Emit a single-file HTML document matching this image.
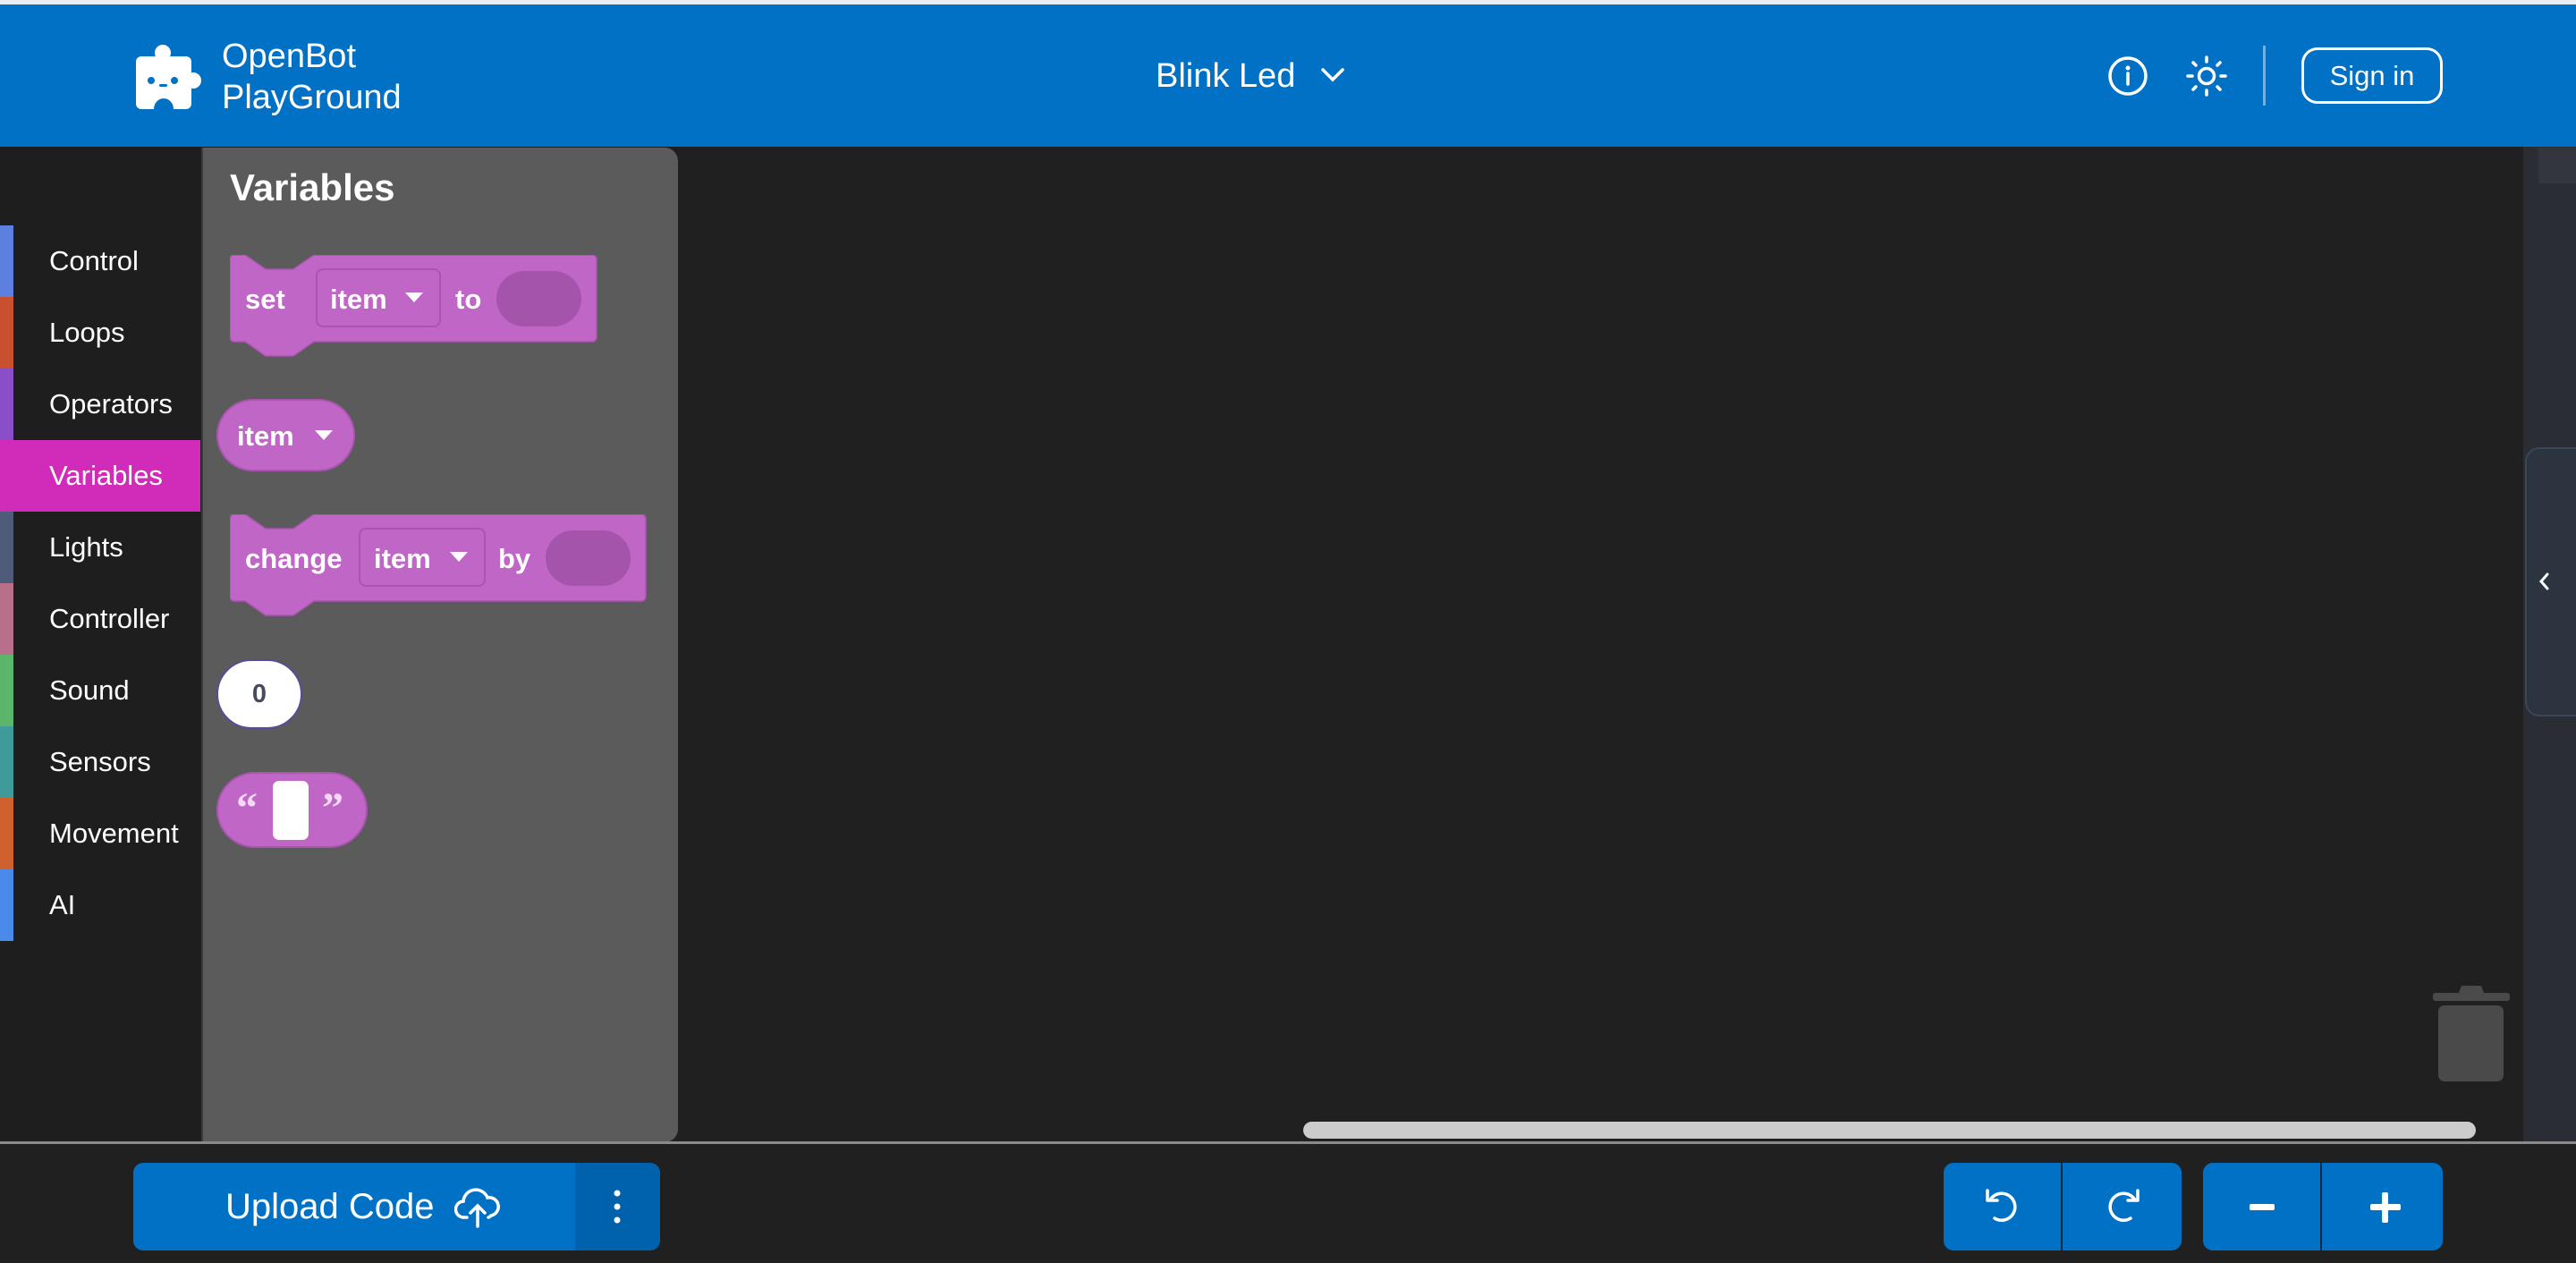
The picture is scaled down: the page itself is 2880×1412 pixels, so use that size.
<!DOCTYPE html>
<html><head><meta charset="utf-8"><style>
*{margin:0;padding:0;box-sizing:border-box}
body{width:2880px;height:1412px;overflow:hidden;background:#202020;font-family:"Liberation Sans",sans-serif;position:relative}
.a{position:absolute}
.hdr{left:0;top:5px;width:2880px;height:159px;background:#0071C5}
.cat{left:0;width:224px;height:80px;color:#fff;font-size:31px;line-height:80px;padding-left:55px}
.bar{left:0;width:15px;height:80px}
.bt{color:#fff;font-weight:bold;font-size:31px;line-height:1}
.btn{background:#0071C5;top:1300px;height:98px}
</style></head><body>
<div class="a" style="left:0;top:0;width:2880px;height:5px;background:#e8eef4"></div>
<div class="a hdr"></div>
<svg class="a" style="left:152px;top:50px" width="74" height="72" viewBox="0 0 74 72">
<circle cx="30" cy="9" r="9" fill="#fff"/>
<rect x="0" y="13" width="62" height="59" rx="6" fill="#fff"/>
<circle cx="64" cy="40" r="9" fill="#fff"/>
<path d="M20 72 a11 12 0 0 1 22 0z" fill="#0071C5"/>
<circle cx="17" cy="40" r="4" fill="#0071C5"/><circle cx="43" cy="40" r="4" fill="#0071C5"/>
<rect x="26" y="44" width="9" height="3" rx="1.5" fill="#0071C5"/>
</svg>
<div class="a" style="left:248px;top:40px;color:#fff;font-size:38px;line-height:46px">OpenBot<br>PlayGround</div>
<div class="a" style="left:1292px;top:62px;color:#fff;font-size:38px;line-height:46px">Blink Led</div>
<svg class="a" style="left:1476px;top:74px" width="28" height="20"><path d="M3 4 L14 15 L25 4" stroke="#fff" stroke-width="3.5" fill="none" stroke-linecap="round"/></svg>
<svg class="a" style="left:2355px;top:61px" width="48" height="48"><circle cx="24" cy="24" r="20" stroke="#fff" stroke-width="3.5" fill="none"/><circle cx="24" cy="15" r="2.5" fill="#fff"/><path d="M24 21 V33" stroke="#fff" stroke-width="3.5" stroke-linecap="round"/></svg>
<svg class="a" style="left:2443px;top:61px" width="48" height="48"><circle cx="24" cy="24" r="8.5" stroke="#fff" stroke-width="3.5" fill="none"/><g stroke="#fff" stroke-width="3.5" stroke-linecap="round"><path d="M24 3v5M24 40v5M3 24h5M40 24h5M9 9l3 3M36 36l3 3M9 39l3-3M36 12l3-3"/></g></svg>
<div class="a" style="left:2530px;top:51px;width:3px;height:67px;background:#6fb3e6"></div>
<div class="a" style="left:2573px;top:53px;width:158px;height:63px;border:3px solid #fff;border-radius:18px;color:#fff;font-size:31px;line-height:57px;text-align:center">Sign in</div>

<div class="a" style="left:0;top:164px;width:224px;height:1113px;background:#1e1e1e"></div>
<div class="a bar" style="top:252px;background:#5B80E0"></div>
<div class="a bar" style="top:332px;background:#C8502F"></div>
<div class="a bar" style="top:412px;background:#8A4FC8"></div>
<div class="a" style="left:0;top:492px;width:224px;height:80px;background:#D02BB9"></div>
<div class="a bar" style="top:572px;background:#4E5C7A"></div>
<div class="a bar" style="top:652px;background:#B8708A"></div>
<div class="a bar" style="top:732px;background:#5BB56A"></div>
<div class="a bar" style="top:812px;background:#3F9A9A"></div>
<div class="a bar" style="top:892px;background:#D0602E"></div>
<div class="a bar" style="top:972px;background:#4A8AE8"></div>
<div class="a cat" style="top:252px">Control</div>
<div class="a cat" style="top:332px">Loops</div>
<div class="a cat" style="top:412px">Operators</div>
<div class="a cat" style="top:492px">Variables</div>
<div class="a cat" style="top:572px">Lights</div>
<div class="a cat" style="top:652px">Controller</div>
<div class="a cat" style="top:732px">Sound</div>
<div class="a cat" style="top:812px">Sensors</div>
<div class="a cat" style="top:892px">Movement</div>
<div class="a cat" style="top:972px">AI</div>

<div class="a" style="left:225px;top:165px;width:533px;height:1112px;background:#5B5B5B;border-radius:0 15px 15px 0;border-left:2px solid #3a3a3a"></div>
<div class="a" style="left:257px;top:186px;color:#fff;font-weight:bold;font-size:42px">Variables</div>

<svg class="a" style="left:257px;top:285px" width="412" height="116"><path d="M5 0H17l23 16h31l23-16H405a5 5 0 0 1 5 5V92a5 5 0 0 1-5 5H94l-23 16H40l-23-16H5a5 5 0 0 1-5-5V5a5 5 0 0 1 5-5z" fill="#C066C6" stroke="#a955b0" stroke-width="1.5"/>
<rect x="97" y="16" width="138" height="64" rx="7" fill="#C066C6" stroke="#a955b0" stroke-width="2"/>
<rect x="298" y="18" width="95" height="62" rx="31" fill="#A455AB"/>
<path d="M196 42h20l-10 11z" fill="#fff"/></svg>
<div class="a bt" style="left:274px;top:319px">set</div>
<div class="a bt" style="left:369px;top:319px">item</div>
<div class="a bt" style="left:509px;top:319px">to</div>

<div class="a" style="left:242px;top:446px;width:155px;height:81px;border-radius:41px;background:#C066C6;border:2px solid #a955b0"></div>
<div class="a bt" style="left:265px;top:472px">item</div>
<svg class="a" style="left:350px;top:478px" width="24" height="16"><path d="M2 3h20l-10 11z" fill="#fff"/></svg>

<svg class="a" style="left:257px;top:575px" width="468" height="116"><path d="M5 0H17l23 16h31l23-16H460a5 5 0 0 1 5 5V92a5 5 0 0 1-5 5H94l-23 16H40l-23-16H5a5 5 0 0 1-5-5V5a5 5 0 0 1 5-5z" fill="#C066C6" stroke="#a955b0" stroke-width="1.5"/>
<rect x="145" y="16" width="140" height="64" rx="7" fill="#C066C6" stroke="#a955b0" stroke-width="2"/>
<rect x="353" y="18" width="95" height="62" rx="31" fill="#A455AB"/>
<path d="M246 42h20l-10 11z" fill="#fff"/></svg>
<div class="a bt" style="left:274px;top:609px">change</div>
<div class="a bt" style="left:418px;top:609px">item</div>
<div class="a bt" style="left:557px;top:609px">by</div>

<div class="a" style="left:242px;top:737px;width:96px;height:78px;border-radius:39px;background:#fff;border:2px solid #5a4a9a;color:#454b5c;font-weight:bold;font-size:29px;line-height:74px;text-align:center">0</div>

<div class="a" style="left:242px;top:863px;width:169px;height:85px;border-radius:43px;background:#C066C6;border:2px solid #a955b0"></div>
<div class="a" style="left:305px;top:873px;width:40px;height:66px;border-radius:7px;background:#fff"></div>
<div class="a" style="left:264px;top:880px;color:#f4d8f6;font-weight:bold;font-size:48px;line-height:1;font-family:'Liberation Serif',serif">“</div>
<div class="a" style="left:360px;top:880px;color:#f4d8f6;font-weight:bold;font-size:48px;line-height:1;font-family:'Liberation Serif',serif">”</div>

<div class="a" style="left:2821px;top:164px;width:59px;height:1113px;background:#2a2d33"></div>
<div class="a" style="left:2838px;top:165px;width:42px;height:40px;background:#33363c"></div>
<div class="a" style="left:2823px;top:500px;width:60px;height:301px;background:#2C3440;border:2px solid #3c4656;border-radius:16px 0 0 16px"></div>
<svg class="a" style="left:2835px;top:638px" width="20" height="24"><path d="M13 4 L6 12 L13 20" stroke="#fff" stroke-width="3" fill="none" stroke-linecap="round"/></svg>

<svg class="a" style="left:2720px;top:1100px" width="86" height="110"><path d="M32 2h22l3 8H29z" fill="#4a4a4a"/><rect x="0" y="10" width="86" height="9" rx="3" fill="#4a4a4a"/><rect x="6" y="24" width="73" height="85" rx="7" fill="#4a4a4a"/></svg>

<div class="a" style="left:1457px;top:1254px;width:1311px;height:19px;border-radius:10px;background:#CCCCCC"></div>
<div class="a" style="left:0;top:1276px;width:2880px;height:3px;background:#8a8a8a"></div>

<div class="a btn" style="left:149px;width:494px;border-radius:11px 0 0 11px"></div>
<div class="a btn" style="left:643px;width:95px;background:#0062AD;border-radius:0 11px 11px 0"></div>
<div class="a" style="left:252px;top:1327px;color:#fff;font-size:40px;line-height:44px">Upload Code</div>
<svg class="a" style="left:508px;top:1325px" width="52" height="50"><path d="M14 36H11a9 9 0 0 1-1-18 14 14 0 0 1 27-4 10 10 0 0 1 4 20 6 6 0 0 1-3 2" stroke="#fff" stroke-width="3.5" fill="none" stroke-linecap="round"/><path d="M26 46V24M18 31l8-8 8 8" stroke="#fff" stroke-width="3.5" fill="none" stroke-linecap="round"/></svg>
<svg class="a" style="left:680px;top:1328px" width="20" height="44"><circle cx="10" cy="6" r="3.5" fill="#fff"/><circle cx="10" cy="21" r="3.5" fill="#fff"/><circle cx="10" cy="36" r="3.5" fill="#fff"/></svg>

<div class="a btn" style="left:2173px;width:266px;border-radius:11px"></div>
<div class="a" style="left:2304px;top:1300px;width:2px;height:98px;background:#0a2a44"></div>
<div class="a btn" style="left:2463px;width:268px;border-radius:11px"></div>
<div class="a" style="left:2594px;top:1300px;width:2px;height:98px;background:#0a2a44"></div>
<svg class="a" style="left:2216px;top:1326px" width="44" height="44"><path d="M10 14a15 15 0 1 1 4 22" stroke="#fff" stroke-width="3.5" fill="none" stroke-linecap="round"/><path d="M6 5v11h11" stroke="#fff" stroke-width="3.5" fill="none" stroke-linecap="round" stroke-linejoin="round"/></svg>
<svg class="a" style="left:2352px;top:1326px" width="44" height="44"><path d="M34 14a15 15 0 1 0-4 22" stroke="#fff" stroke-width="3.5" fill="none" stroke-linecap="round"/><path d="M38 5v11H27" stroke="#fff" stroke-width="3.5" fill="none" stroke-linecap="round" stroke-linejoin="round"/></svg>
<div class="a" style="left:2515px;top:1346px;width:28px;height:7px;background:#fff;border-radius:2px"></div>
<div class="a" style="left:2650px;top:1346px;width:34px;height:7px;background:#fff;border-radius:2px"></div>
<div class="a" style="left:2663px;top:1333px;width:7px;height:34px;background:#fff;border-radius:2px"></div>
</body></html>
